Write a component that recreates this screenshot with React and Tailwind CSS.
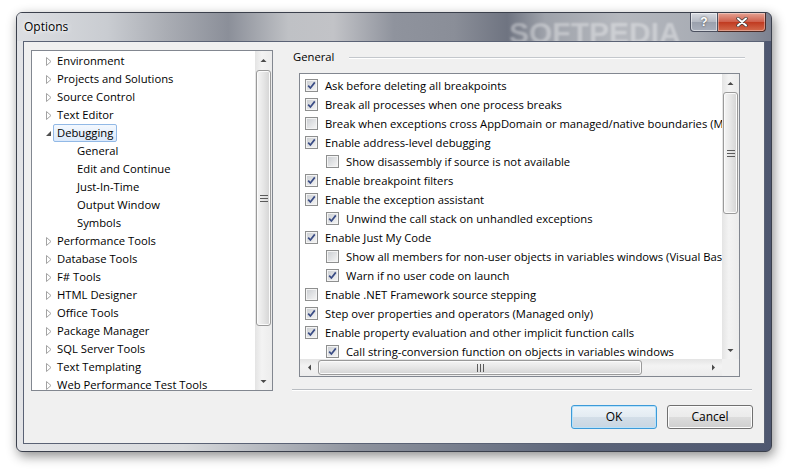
import React from "react";

const tree = [
  { label: "Environment" },
  { label: "Projects and Solutions" },
  { label: "Source Control" },
  { label: "Text Editor" },
  { label: "Debugging", open: true, selected: true },
  { label: "General", child: true },
  { label: "Edit and Continue", child: true },
  { label: "Just-In-Time", child: true },
  { label: "Output Window", child: true },
  { label: "Symbols", child: true },
  { label: "Performance Tools" },
  { label: "Database Tools" },
  { label: "F# Tools" },
  { label: "HTML Designer" },
  { label: "Office Tools" },
  { label: "Package Manager" },
  { label: "SQL Server Tools" },
  { label: "Text Templating" },
  { label: "Web Performance Test Tools" },
];

const options = [
  { text: "Ask before deleting all breakpoints", on: true },
  { text: "Break all processes when one process breaks", on: true },
  { text: "Break when exceptions cross AppDomain or managed/native boundaries (Managed only)", on: false },
  { text: "Enable address-level debugging", on: true },
  { text: "Show disassembly if source is not available", on: false, nested: true },
  { text: "Enable breakpoint filters", on: true },
  { text: "Enable the exception assistant", on: true },
  { text: "Unwind the call stack on unhandled exceptions", on: true, nested: true },
  { text: "Enable Just My Code", on: true },
  { text: "Show all members for non-user objects in variables windows (Visual Basic only)", on: false, nested: true },
  { text: "Warn if no user code on launch", on: true, nested: true },
  { text: "Enable .NET Framework source stepping", on: false },
  { text: "Step over properties and operators (Managed only)", on: true },
  { text: "Enable property evaluation and other implicit function calls", on: true },
  { text: "Call string-conversion function on objects in variables windows", on: true, nested: true },
];

const Check = ({ on }) => (
  <span className="flex h-[13px] w-[13px] shrink-0 items-center justify-center border border-[#8e8f8f] bg-[#f4f4f4]">
    <span className="relative flex h-[9px] w-[9px] items-center justify-center bg-[linear-gradient(135deg,#cdd0d4,#f3f3f3)]">
      {on && (
        <svg width="11" height="11" viewBox="0 0 11 11" className="absolute -left-[1px] -top-[1px]">
          <path d="M2.2 5.6 L4.4 8 L8.8 2.4" fill="none" stroke="#3a4c85" strokeWidth="1.7" />
        </svg>
      )}
    </span>
  </span>
);

const Arrow = ({ dir }) => {
  const d = {
    up: "M0.5 4 L3.5 1 L6.5 4 Z",
    down: "M0.5 1 L3.5 4 L6.5 1 Z",
    left: "M4 0.5 L1 3.5 L4 6.5 Z",
    right: "M1 0.5 L4 3.5 L1 6.5 Z",
  }[dir];
  const vert = dir === "up" || dir === "down";
  return (
    <svg width={vert ? 7 : 5} height={vert ? 5 : 7} viewBox={vert ? "0 0 7 5" : "0 0 5 7"}>
      <path d={d} fill="#4a4a4a" />
    </svg>
  );
};

const GripV = () => (
  <svg width="8" height="7" viewBox="0 0 8 7">
    <path d="M0 0.5 H8 M0 3.5 H8 M0 6.5 H8" stroke="#5b5b5b" strokeWidth="1" />
  </svg>
);

const GripH = () => (
  <svg width="7" height="8" viewBox="0 0 7 8">
    <path d="M0.5 0 V8 M3.5 0 V8 M6.5 0 V8" stroke="#5b5b5b" strokeWidth="1" />
  </svg>
);

const VScroll = ({ thumbTop, thumbHeight }) => (
  <div className="flex w-[17px] shrink-0 flex-col bg-[linear-gradient(to_right,#e4e4e4,#f3f3f3_40%,#ececec)]">
    <div className="flex h-[18px] shrink-0 items-center justify-center">
      <Arrow dir="up" />
    </div>
    <div className="flex flex-1 flex-col">
      <div style={{ height: thumbTop }} />
      <div
        className="mx-[1px] flex items-center justify-center rounded-[3px] border border-[#9a9a9a] bg-[linear-gradient(to_right,#f5f5f5,#e6e6e6_50%,#d4d4d4)] shadow-[inset_0_0_0_1px_#fbfbfb]"
        style={{ height: thumbHeight }}
      >
        <GripV />
      </div>
    </div>
    <div className="flex h-[18px] shrink-0 items-center justify-center">
      <Arrow dir="down" />
    </div>
  </div>
);

const Row = ({ item }) => {
  const label = (
    <span
      className={`rounded-[2px] border px-[3px] leading-[16px] ${
        item.selected
          ? "border-[#92b9e6] bg-[linear-gradient(to_bottom,#f3f8fe,#dbe9fb)]"
          : "border-transparent"
      }`}
    >
      {item.label}
    </span>
  );
  if (item.child) {
    return <div className="flex h-[18px] items-center whitespace-nowrap pl-[41px]">{label}</div>;
  }
  return (
    <div className="flex h-[18px] items-center whitespace-nowrap pl-[12px]">
      <span className="flex w-[9px] justify-center">
        {item.open ? (
          <svg width="7" height="7" viewBox="0 0 7 7">
            <path d="M6 1 L6 6 L1 6 Z" fill="#4f4f4f" />
          </svg>
        ) : (
          <svg width="6" height="9" viewBox="0 0 6 9">
            <path d="M0.5 0.5 L5 4.5 L0.5 8.5 Z" fill="#ffffff" stroke="#a3a3a3" strokeWidth="1" />
          </svg>
        )}
      </span>
      {label}
    </div>
  );
};

const Button = ({ children, primary }) => (
  <div
    className={`flex h-[24px] w-[86px] items-center justify-center rounded-[3px] border ${
      primary
        ? "border-[#3c9ad8] bg-[linear-gradient(to_bottom,#eef4f9,#e3ebf2_50%,#d3dee8_50%,#c9d6e2)] shadow-[inset_0_0_0_1px_#b9e2fa]"
        : "border-[#707070] bg-[linear-gradient(to_bottom,#f2f2f2,#ebebeb_50%,#dddddd_50%,#cfcfcf)] shadow-[inset_0_0_0_1px_#fcfcfc]"
    }`}
  >
    {children}
  </div>
);

export default function App() {
  return (
    <div className="h-[472px] w-[793px] overflow-hidden bg-white pl-[16px] pt-[12px] font-['Open_Sans',sans-serif] text-[11.25px] text-black">
      <div className="flex h-[440px] w-[756px] flex-col rounded-[6px] border border-[#3b404c] bg-[linear-gradient(to_right,#e3e4e7_0%,#d8dadd_22%,#8e939e_45%,#5b6479_75%,#4e5770_100%)] shadow-[2px_4px_12px_rgba(0,0,0,0.45)]">
        <div className="relative flex h-[28px] shrink-0 items-start overflow-hidden rounded-t-[5px] bg-[linear-gradient(to_right,#dcdee2_0%,#c9ccd1_12%,#a9acb3_20%,#8b8f99_28%,#bfc1c5_36%,#c2c3c7_42%,#8f939d_50%,#8a8e98_58%,#6f7481_65%,#9ea2aa_70%,#b5b8be_80%,#a9adb5_90%,#7c8190_100%)]">
          <span className="pl-[7px] pt-[6px] text-[12px] leading-[16px] [text-shadow:0_0_6px_#ffffff,0_0_3px_#ffffff]">
            Options
          </span>
          <span className="pointer-events-none absolute left-[492px] top-[-3px] font-['Liberation_Sans',sans-serif] text-[30px] font-bold tracking-[0px] text-white/35 blur-[0.8px]">
            SOFTPEDIA
          </span>
          <div className="relative ml-auto mr-[5px] flex">
            <div className="flex h-[19px] w-[28px] items-center justify-center rounded-bl-[4px] border border-t-0 border-[#4c5160] bg-[linear-gradient(to_bottom,#d8dbe1,#b3b8c2_50%,#9aa0ad_50%,#a9afbb)] shadow-[inset_0_0_0_1px_rgba(255,255,255,0.5)]">
              <span className="font-['Liberation_Sans',sans-serif] text-[12px] font-bold leading-none text-white [text-shadow:0_0_2px_#333]">
                ?
              </span>
            </div>
            <div className="flex h-[19px] w-[48px] items-center justify-center rounded-br-[4px] border border-l-0 border-t-0 border-[#4c2a26] bg-[linear-gradient(to_bottom,#e5a394,#cf5d49_50%,#c0391f_50%,#d36a4c)] shadow-[inset_0_0_0_1px_rgba(255,255,255,0.35)]">
              <svg width="12" height="10" viewBox="0 0 12 10">
                <path d="M2 1.5 L10 8.5 M10 1.5 L2 8.5" stroke="#3c3c3c" strokeWidth="3.4" strokeLinecap="round" />
                <path d="M2 1.5 L10 8.5 M10 1.5 L2 8.5" stroke="#ffffff" strokeWidth="2" strokeLinecap="round" />
              </svg>
            </div>
          </div>
        </div>

        <div className="mx-[6px] mb-[7px] flex flex-1 items-start border border-[#5a6275] bg-[#f0f0f0]">
          <div className="ml-[7px] mt-[8px] flex h-[341px] w-[242px] border border-[#828790] bg-white">
            <div className="flex-1 overflow-hidden pt-[1px]">
              {tree.map((item) => (
                <Row key={item.label} item={item} />
              ))}
            </div>
            <VScroll thumbTop={1} thumbHeight={256} />
          </div>

          <div className="ml-[18px] flex w-[462px] flex-col pt-[7px]">
            <div className="flex h-[16px] items-center pl-[2px] pr-[8px]">
              <span className="leading-[16px]">General</span>
              <span className="ml-[15px] h-px flex-1 bg-[#c3c7cc] shadow-[0_1px_0_#ffffff]" />
            </div>

            <div className="ml-[8px] mt-[8px] flex h-[304px] w-[441px] flex-col border border-[#828790] bg-white">
              <div className="flex min-h-0 flex-1">
                <div className="flex-1 overflow-hidden pt-[2px]">
                  {options.map((o) => (
                    <div
                      key={o.text}
                      className={`flex h-[19px] items-center gap-[7px] whitespace-nowrap ${o.nested ? "pl-[26px]" : "pl-[5px]"}`}
                    >
                      <Check on={o.on} />
                      <span className="leading-[16px]">{o.text}</span>
                    </div>
                  ))}
                </div>
                <VScroll thumbTop={0} thumbHeight={122} />
              </div>
              <div className="flex h-[17px] shrink-0">
                <div className="flex flex-1 bg-[linear-gradient(to_bottom,#e4e4e4,#f3f3f3_40%,#ececec)]">
                  <div className="flex w-[18px] shrink-0 items-center justify-center">
                    <Arrow dir="left" />
                  </div>
                  <div className="my-[1px] flex w-[324px] items-center justify-center rounded-[3px] border border-[#9a9a9a] bg-[linear-gradient(to_bottom,#f5f5f5,#e6e6e6_50%,#d4d4d4)] shadow-[inset_0_0_0_1px_#fbfbfb]">
                    <GripH />
                  </div>
                  <div className="flex-1" />
                  <div className="flex w-[18px] shrink-0 items-center justify-center">
                    <Arrow dir="right" />
                  </div>
                </div>
                <div className="w-[17px] bg-[#f0f0f0]" />
              </div>
            </div>

            <div className="ml-[1px] mt-[12px] h-px w-[460px] bg-[#b9bdc2] shadow-[0_1px_0_#ffffff]" />

            <div className="mt-[15px] flex justify-end gap-[10px] text-[12px]">
              <Button primary>OK</Button>
              <Button>Cancel</Button>
            </div>
          </div>
        </div>
      </div>
    </div>
  );
}
